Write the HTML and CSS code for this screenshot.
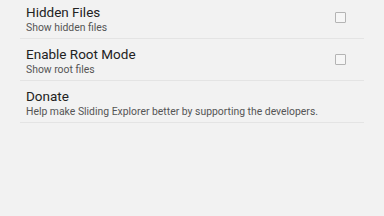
FILE: index.html
```html
<!DOCTYPE html>
<html lang="en">
<head>
  <meta charset="UTF-8" />
  <meta name="viewport" content="width=device-width, initial-scale=1.0"/>
  <title>Settings - Sliding Explorer</title>
  <link rel="stylesheet" href="styles.css">
</head>
<body>

  <ul class="prefs">
    <li class="pref">
      <div class="pref-text">
        <h2>Hidden Files</h2>
        <p>Show hidden files</p>
      </div>
      <span class="check"></span>
    </li>

    <li class="pref">
      <div class="pref-text">
        <h2>Enable Root Mode</h2>
        <p>Show root files</p>
      </div>
      <span class="check"></span>
    </li>

    <li class="pref">
      <div class="pref-text">
        <h2>Donate</h2>
        <p>Help make Sliding Explorer better by supporting the developers.</p>
      </div>
    </li>
  </ul>

</body>
</html>
```

FILE: styles.css
```css
* {
  box-sizing: border-box;
  margin: 0;
  padding: 0;
}

body {
  font-family: Roboto, 'Noto Sans', sans-serif;
  background-color: #f2f2f2;
  color: #222;
  width: 384px;
  height: 216px;
  overflow: hidden;
}

.prefs {
  list-style: none;
  margin: -3px 20px 0 20px;
}

.pref {
  display: flex;
  align-items: center;
  height: 42px;
  padding: 0 0 0 6px;
  border-bottom: 1px solid #e4e4e4;
}

.pref-text {
  flex: 1;
  align-self: flex-start;
  padding-top: 6px;
}

.pref h2 {
  font-size: 13.5px;
  font-weight: 400;
  line-height: 18px;
  color: #222;
}

.pref p {
  font-size: 10.4px;
  line-height: 14px;
  color: #555;
}

.check {
  width: 11px;
  height: 11px;
  margin-right: 18px;
  border: 1.5px solid #b4b4b4;
  border-radius: 1px;
  background: #f6f6f6;
}
```
